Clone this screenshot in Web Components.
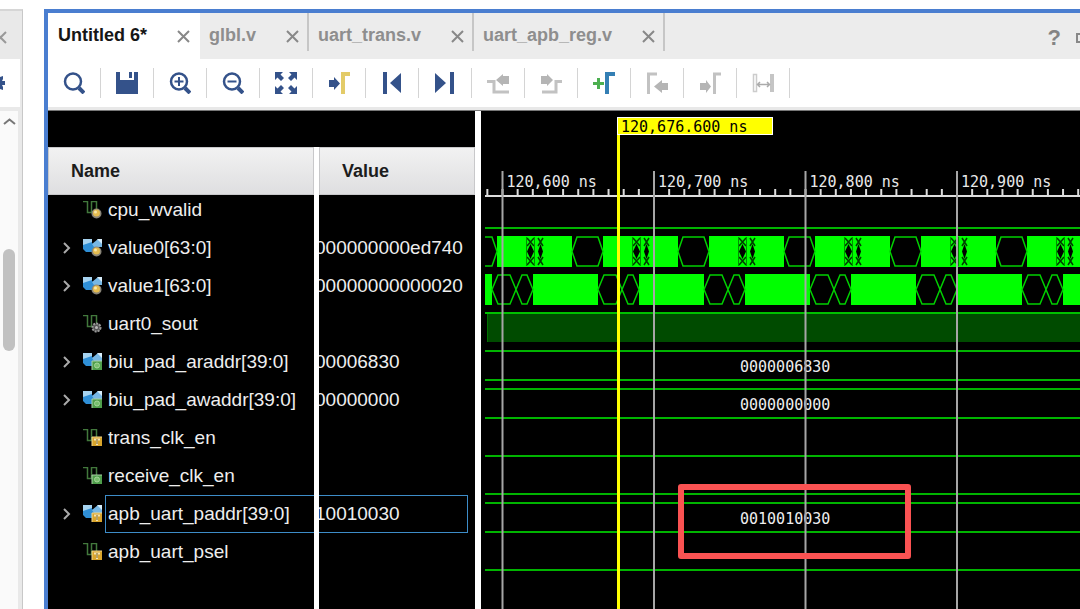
<!DOCTYPE html>
<html lang="en">
<head>
<meta charset="utf-8">
<title>Waveform viewer</title>
<style>
    html, body {
        margin: 0;
        height: 100%;
    }
    body {
        display: flex;
        overflow: hidden;
        background: #fff;
        font-family: "Liberation Sans", Arial, sans-serif;
    }
</style>
</head>
<body>
<side-panel></side-panel>
<wave-window>
    <tab-item slot="tabs" active>Untitled 6*</tab-item>
    <tab-item slot="tabs">glbl.v</tab-item>
    <tab-item slot="tabs">uart_trans.v</tab-item>
    <tab-item slot="tabs">uart_apb_reg.v</tab-item>
    <tool-bar slot="toolbar"></tool-bar>
    <signal-table slot="signals"></signal-table>
    <wave-view slot="waves"></wave-view>
</wave-window>

<script>
const SIGNALS = [
    { name: "cpu_wvalid", badge: "reg", trace: "low" },
    { name: "value0[63:0]", bus: true, badge: "reg", value: "000000000ed740", trace: "value0" },
    { name: "value1[63:0]", bus: true, badge: "reg", value: "00000000000020", trace: "value1" },
    { name: "uart0_sout", badge: "net", trace: "high" },
    { name: "biu_pad_araddr[39:0]", bus: true, badge: "out", value: "00006830", trace: "bus", text: "0000006830" },
    { name: "biu_pad_awaddr[39:0]", bus: true, badge: "out", value: "00000000", trace: "bus", text: "0000000000" },
    { name: "trans_clk_en", badge: "in", trace: "low" },
    { name: "receive_clk_en", badge: "out", trace: "low" },
    { name: "apb_uart_paddr[39:0]", bus: true, badge: "in", value: "10010030", trace: "bus", text: "0010010030", selected: true },
    { name: "apb_uart_psel", badge: "in", trace: "low" }
];

const BADGES = {
    reg: `<circle cx="13.5" cy="12.5" r="5" fill="#8a8578"/><circle cx="13.5" cy="12" r="3.5" fill="#e5bd50"/><circle cx="12.5" cy="11" r="1.5" fill="#fae7a8"/>`,
    net: `<circle cx="13.5" cy="12.5" r="4" fill="#555" stroke="#999" stroke-width="2" stroke-dasharray="2 1"/><circle cx="13.5" cy="12.5" r="1.5" fill="#bbb"/>`,
    out: `<rect x="9" y="8" width="10" height="9" fill="#4f9e4b"/><path d="M9 17V8h10" fill="none" stroke="#a9cfa5"/><circle cx="14" cy="12.5" r="2.5" fill="#77c06c" stroke="#a5d59b"/>`,
    in: `<rect x="9" y="8" width="10" height="9" fill="#d9a52c"/><path d="M9 17V8h10" fill="none" stroke="#f1d68c"/><path d="M11 10.500h6M14 10v6" stroke="#f5e3b0" stroke-width="2"/><path d="M14 10v5" stroke="#76601f"/>`
};

const signalIcon = signal => `
    <svg width="20" height="18" viewBox="0 0 20 18" aria-hidden="true">
        ${signal.bus
            ? `<path d="M0 0h9v4l5 5v4H3l-3-3z" fill="#2f8fd6"/><path d="M0 0h9v3L0 6z" fill="#a6d3f0"/><path d="M9 5l6-5h4v8h-8z" fill="#77b7e4"/><path d="M14 0h5v5z" fill="#d8eefb"/>`
            : `<path d="M0 .500h4.500v11h4v-11h5v8" fill="none" stroke="#42783c" stroke-width="1.500"/>`}
        ${BADGES[signal.badge]}
    </svg>`;

const CLOSE = `<svg width="13" height="13" viewBox="0 0 13 13" aria-hidden="true"><path d="M1 1l11 11M12 1L1 12" stroke="#888" stroke-width="2" fill="none"/></svg>`;

class SidePanel extends HTMLElement {
    constructor() {
        super();
        this.attachShadow({ mode: "open" }).innerHTML = `
        <style>
            :host {
                display: flex;
                flex-direction: column;
                flex: none;
                width: 23px;
                margin-top: 9px;
                box-sizing: border-box;
                border-top: 2px solid #d6d6d6;
                border-right: 1px solid #c8c8c8;
                background: #e9e9e9;
            }
            .head {
                height: 48px;
                display: flex;
                align-items: center;
                padding-top: 4px;
                box-sizing: border-box;
            }
            .tools {
                height: 48px;
                margin-right: 2px;
                background: #fff;
                display: flex;
                align-items: center;
            }
            .scroll {
                flex: 1;
                margin: 4px 4px 0 0;
                padding: 6px 0 0 3px;
                background: #fafafa;
            }
            .thumb {
                width: 12px;
                height: 102px;
                margin-top: 122px;
                border-radius: 6px;
                background: #c1c1c1;
            }
            svg {
                display: block;
            }
        </style>
        <div class="head"><svg width="7" height="13" viewBox="6 0 7 13"><path d="M1 1l11 11M12 1L1 12" stroke="#999" stroke-width="2"/></svg></div>
        <div class="tools"><svg width="5" height="16"><path d="M0 2l3-1v3l-1 2h3v4H2l1 2v3l-3-1z" fill="#34528a"/></svg></div>
        <div class="scroll">
            <svg width="13" height="10"><path d="M1 7l5.500-4.500L12 7" fill="none" stroke="#777" stroke-width="2"/></svg>
            <div class="thumb"></div>
        </div>
        `;
    }
}

class WaveWindow extends HTMLElement {
    constructor() {
        super();
        this.attachShadow({ mode: "open" }).innerHTML = `
        <style>
            :host {
                flex: 1;
                min-width: 0;
                display: flex;
                flex-direction: column;
                margin: 9px 0 0 21px;
                border: solid #4a7ed0;
                border-width: 4px 0 0 4px;
            }
            header {
                display: flex;
                height: 46px;
                background: #ececec;
                overflow: hidden;
            }
            .actions {
                margin-left: auto;
                display: flex;
                align-items: center;
                gap: 15px;
                margin-right: -12px;
                padding-top: 4px;
            }
            button {
                border: 0;
                padding: 0;
                background: none;
                color: #848484;
                font: bold 22px/22px "Liberation Sans", Arial, sans-serif;
            }
            svg {
                display: block;
            }
            main {
                flex: 1;
                min-height: 0;
                display: flex;
                background: #000;
                border-top: 1px solid #777;
            }
        </style>
        <header>
            <slot name="tabs"></slot>
            <div class="actions">
                <button type="button" aria-label="Help">?</button>
                <button type="button" aria-label="Maximize"><svg width="16" height="14"><path d="M1 3h14v8H1z" fill="none" stroke="#888" stroke-width="2"/></svg></button>
            </div>
        </header>
        <slot name="toolbar"></slot>
        <main>
            <slot name="signals"></slot>
            <slot name="waves"></slot>
        </main>
        `;
    }
}

class TabItem extends HTMLElement {
    constructor() {
        super();
        this.attachShadow({ mode: "open" }).innerHTML = `
        <style>
            :host {
                display: flex;
                align-items: flex-start;
                color: #8e8e8e;
                font-weight: bold;
                font-size: 18px;
                line-height: 22px;
                white-space: nowrap;
            }
            :host([active]) {
                background: #fff;
                color: #161616;
            }
            .tab {
                display: flex;
                align-items: center;
                gap: 30px;
                height: 38px;
                box-sizing: border-box;
                padding: 6px 8px 0 9px;
                border-right: 2px solid #c6c6c6;
            }
            :host([active]) .tab {
                padding-left: 10px;
                border-color: transparent;
            }
            button {
                border: 0;
                padding: 2px 0 0;
                background: none;
            }
            svg {
                display: block;
            }
        </style>
        <div class="tab"><slot></slot><button type="button" aria-label="Close">${CLOSE}</button></div>
        `;
    }
}

class ToolBar extends HTMLElement {
    constructor() {
        super();
        const blue = "#34528a";
        const gray = "#c2c2c2";
        const glass = `<circle cx="10" cy="9.500" r="8" fill="none" stroke="${blue}" stroke-width="2.500"/><path d="M16 16l5 5" stroke="${blue}" stroke-width="4"/>`;
        const tools = [
            ["Search", glass],
            ["Save", `<path d="M0 0h4v8h14V0h4v22H0z" fill="${blue}"/><path d="M13 0h3v6h-3z" fill="${blue}"/>`],
            ["Zoom in", glass + `<path d="M5.500 9.500h9M10 5v9" stroke="${blue}" stroke-width="2"/>`],
            ["Zoom out", glass + `<path d="M5.500 9.500h9" stroke="${blue}" stroke-width="2"/>`],
            ["Zoom fit", `<path d="M0 0h8L5.500 2.500 9 6 6 9 2.500 5.500 0 8zM22 0v8l-2.500-2.500L16 9l-3-3 3.500-3.500L14 0zM0 22v-8l2.500 2.500L6 13l3 3-3.500 3.500L8 22zM22 22h-8l2.500-2.500L13 16l3-3 3.500 3.500L22 14z" fill="${blue}"/>`],
            ["Go to cursor", `<path d="M1 8h5V5l6 6.500L6 18v-3H1z" fill="${blue}"/><path d="M15 22V2h7" fill="none" stroke="#e3cb68" stroke-width="4"/>`],
            ["Go to start", `<path d="M2 0h4v22H2zM20 1v20L9 11z" fill="${blue}"/>`],
            ["Go to end", `<path d="M20 0h-4v22h4zM1 1v20l11-10z" fill="${blue}"/>`],
            ["Previous transition", `<path d="M0 9.500h7V20h15" fill="none" stroke="${gray}" stroke-width="3"/><path d="M22 4v8h-6v2l-7-6 7-6v2z" fill="#b5b5b5"/>`],
            ["Next transition", `<path d="M22 9.500h-6V20H2" fill="none" stroke="${gray}" stroke-width="3"/><path d="M1 4v8h6v2l6-6-6-6v2z" fill="#b5b5b5"/>`],
            ["Add marker", `<path d="M0 11.500h11M5.500 6v11" stroke="#4caf50" stroke-width="3"/><path d="M14 22V2h8" fill="none" stroke="#347fb4" stroke-width="4"/>`],
            ["Previous marker", `<path d="M2.500 22V2H11" fill="none" stroke="${gray}" stroke-width="3"/><path d="M22 11v7h-6v3l-8-6.500L16 8v3z" fill="#b5b5b5"/>`],
            ["Next marker", `<path d="M15.500 22V2H22" fill="none" stroke="${gray}" stroke-width="3"/><path d="M1 11v7h6v3l5-6.500L7 8v3z" fill="#b5b5b5"/>`],
            ["Swap cursors", `<path d="M1.500 2.500h3v17h-3z" fill="none" stroke="#ccc" stroke-width="1.500"/><path d="M18 2h4v18h-4z" fill="#c5c5c5"/><path d="M6 12.500h11M8 10l-2.500 2.500L8 15M15 10l2.500 2.500L15 15" fill="none" stroke="#aaa" stroke-width="1.500"/>`]
        ];
        this.attachShadow({ mode: "open" }).innerHTML = `
        <style>
            :host {
                display: flex;
                align-items: center;
                height: 48px;
                flex: none;
                background: #fff;
                border-bottom: 3px solid #e8e8e8;
            }
            button {
                width: 53px;
                height: 30px;
                padding: 0;
                border: 0;
                border-right: 1px solid #d4d4d4;
                background: none;
            }
            svg {
                display: block;
                margin: 0 auto;
            }
        </style>
        ${tools.map(([label, shape]) => `<button type="button" aria-label="${label}"><svg width="22" height="22" viewBox="0 0 22 22">${shape}</svg></button>`).join("")}
        `;
    }
}

class SignalTable extends HTMLElement {
    constructor() {
        super();
        const row = signal => `
            <tr class="${signal.selected ? "selected" : ""}">
                <td class="name"><div class="cell">
                    <span class="arrow">${signal.bus ? `<svg width="8" height="12"><path d="M1 1l5 5-5 5" fill="none" stroke="#aaa" stroke-width="2"/></svg>` : ""}</span>
                    ${signalIcon(signal)}
                    <span class="label">${signal.name}</span>
                </div></td>
                <td class="value"><div class="number">${signal.value || ""}</div></td>
            </tr>`;
        this.attachShadow({ mode: "open" }).innerHTML = `
        <style>
            :host {
                flex: none;
                width: 427px;
                padding-top: 36px;
                overflow: hidden;
                color: #eee;
                font-size: 19px;
                line-height: 22px;
            }
            table {
                width: 100%;
                height: 100%;
                table-layout: fixed;
                border-spacing: 0;
            }
            th {
                height: 48px;
                box-sizing: border-box;
                padding: 0 23px;
                text-align: left;
                font-size: 18px;
                color: #1c1c1c;
                background: linear-gradient(#f2f2f2, #dedee0) padding-box;
                box-shadow: inset 0 0 0 1px #c8c8ca;
            }
            th:first-child, .name {
                width: 271px;
                box-sizing: border-box;
                border-right: 5px solid #fff;
            }
            td {
                height: 38px;
                padding: 0;
                box-sizing: border-box;
            }
            tbody tr:first-child td {
                height: 34px;
                padding-bottom: 4px;
            }
            tbody tr:first-child .cell, tbody tr:first-child .number {
                height: 30px;
            }
            .cell {
                display: flex;
                align-items: center;
                height: 38px;
                padding-left: 15px;
            }
            .arrow {
                width: 20px;
                height: 12px;
            }
            svg {
                display: block;
                flex: none;
            }
            .label {
                flex: 1;
                margin-left: 2px;
                padding-left: 2px;
                border: 1px solid transparent;
                border-right: 0;
                white-space: nowrap;
            }
            .number {
                display: flex;
                align-items: center;
                height: 38px;
                box-sizing: border-box;
                overflow: hidden;
                text-indent: -4px;
                margin-right: 7px;
            }
            .selected .label {
                padding: 7px 0 7px 2px;
                border-color: #3d8cc8;
            }
            .selected .number {
                border: 1px solid #3d8cc8;
                border-left: 0;
            }
            .rest td {
                height: auto;
            }
        </style>
        <table>
            <thead><tr><th>Name</th><th>Value</th></tr></thead>
            <tbody>
                ${SIGNALS.map(row).join("")}
                <tr class="rest"><td class="name"></td><td></td></tr>
            </tbody>
        </table>
        `;
    }
}

class WaveTrace extends HTMLElement {
    constructor() {
        super();
        this.shadowDOM = this.attachShadow({ mode: "open" });
    }

    set signal(signal) {
        this._signal = signal;
        this.render();
    }

    // black cell of a bus, between two value changes
    hex(x1, x2, slope = 5) {
        return `<rect x="${x1}" y="3" width="${x2 - x1}" height="31" fill="#000"/>
            <path d="M${x1} 18.500L${x1 + slope} 4H${x2 - slope}L${x2} 18.500L${x2 - slope} 33H${x1 + slope}Z" fill="#000" stroke="#00d000" stroke-width="1.500"/>`;
    }

    // very short cells: a dark core with crossings above and below
    burst(x, w) {
        const m = x + w / 2;
        const e = x + w;
        return `<path d="M${m} 11L${e} 18.500L${m} 26L${x} 18.500Z" fill="#000"/>
            <path d="M${x} 5L${e} 13M${e} 5L${x} 13M${x} 32L${e} 24M${e} 32L${x} 24" stroke="#003c00" stroke-width="1.500"/>`;
    }

    shapes() {
        const line = (y, color = "#00b400") => `<path d="M4 ${y}H4000" stroke="${color}" stroke-width="2"/>`;
        let out = "";
        switch (this._signal.trace) {
        case "low":
            return line(33);
        case "high":
            return `<rect x="6" y="4" width="4000" height="29" fill="#004b00"/><path d="M6.500 4v29" stroke="#007000"/>${line(4, "#00c000")}`;
        case "bus":
            return `${line(4)}${line(33)}<text x="259" y="25">${this._signal.text}</text>`;
        case "value0":
            out = `<rect x="4" y="3" width="4000" height="31" fill="#0f0"/>`;
            for (let x = -15; x < 4000; x += 106) {
                out += this.hex(x, x + 31) + this.burst(x + 61, 7) + this.burst(x + 72, 5)
                    + `<path d="M${x + 60.5} 4v29M${x + 68.5} 4v29" stroke="#009000"/>`;
            }
            return out;
        case "value1":
            out = `<rect x="4" y="3" width="4000" height="31" fill="#0f0"/>`;
            for (let x = 11; x < 4000; x += 106) {
                out += this.hex(x, x + 24, 6) + this.hex(x + 24, x + 41, 6);
            }
            return out;
        }
    }

    render() {
        this.shadowDOM.innerHTML = `
        <style>
            :host {
                display: block;
                height: 38px;
                margin-left: 4px;
                overflow: hidden;
            }
            svg {
                display: block;
                width: 100%;
                height: 38px;
            }
            text {
                fill: #eee;
                font: 15px "DejaVu Sans Mono", monospace;
            }
        </style>
        <svg><g transform="translate(-4 0)">${this.shapes()}</g></svg>
        `;
    }
}

class WaveView extends HTMLElement {
    constructor() {
        super();
        this.shadowDOM = this.attachShadow({ mode: "open" });
        this.render();
    }

    render() {
        const labels = Math.ceil((window.innerWidth - 502) / 151.5);
        let grid = "";
        let ruler = "";
        for (let i = 0; i < labels; i++) {
            const x = 21.5 + i * 151.5;
            grid += `<path d="M${x} 60V4000"/>`;
            ruler += `<text x="${x + 4}" y="76">${`120,${600 + i * 100}`} ns</text>`;
        }
        for (let x = 6.35; x < 4000; x += 15.15) {
            ruler += `<path d="M${x} 78v7"/>`;
        }
        this.shadowDOM.innerHTML = `
        <style>
            :host {
                flex: 1;
                min-width: 0;
                position: relative;
                overflow: hidden;
                border-left: 6px solid #fff;
                font: 15px/18px "DejaVu Sans Mono", monospace;
            }
            .ruler {
                display: block;
                width: 100%;
                height: 84px;
                overflow: visible;
                fill: #e8e8e8;
                stroke: #ddd;
                stroke-width: 2;
            }
            .ruler text {
                stroke: none;
            }
            .grid {
                position: absolute;
                top: 0;
                left: 0;
                width: 100%;
                height: 100%;
                stroke: #a6a6a6;
                stroke-width: 2;
            }
            .cursor {
                position: absolute;
                top: 6px;
                bottom: 0;
                left: 136px;
                border-left: 3px solid #ff0;
            }
            .cursor output {
                display: block;
                width: 156px;
                height: 18px;
                box-sizing: border-box;
                margin-left: -3px;
                padding-left: 3px;
                border: 1px solid #fff;
                background: #ff0;
                color: #000;
                white-space: nowrap;
            }
            .note {
                position: absolute;
                top: 373px;
                left: 197px;
                width: 233px;
                height: 75px;
                box-sizing: border-box;
                border: 6px solid #fa5252;
                border-radius: 3px;
            }
        </style>
        <svg class="ruler">${ruler}<path d="M4 85H4000"/></svg>
        <div class="traces"></div>
        <svg class="grid">${grid}</svg>
        <div class="cursor"><output>120,676.600 ns</output></div>
        <div class="note"></div>
        `;
        const traces = this.shadowDOM.querySelector(".traces");
        SIGNALS.forEach(signal => {
            const trace = document.createElement("wave-trace");
            trace.signal = signal;
            traces.appendChild(trace);
        });
    }
}

customElements.define("side-panel", SidePanel);
customElements.define("wave-window", WaveWindow);
customElements.define("tab-item", TabItem);
customElements.define("tool-bar", ToolBar);
customElements.define("signal-table", SignalTable);
customElements.define("wave-trace", WaveTrace);
customElements.define("wave-view", WaveView);
</script>
</body>
</html>
